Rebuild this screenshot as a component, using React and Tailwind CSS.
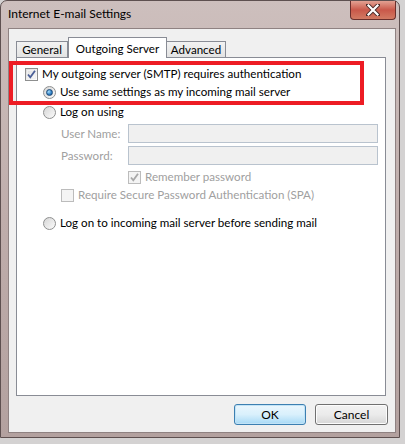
import React from "react";

const font = { fontFamily: 'Lato, "Liberation Sans", Arial, sans-serif' };

function Checkbox({ checked, disabled }) {
  return (
    <span
      className={`relative inline-flex h-[13px] w-[13px] shrink-0 items-center justify-center border ${
        disabled ? "border-[#bcbcbc] bg-[#f4f4f4]" : "border-[#8e8f8f] bg-gradient-to-br from-[#dcdcdc] to-[#ffffff]"
      }`}
    >
      {!disabled && <span className="absolute inset-[1px] border border-[#f0f0f0] bg-gradient-to-br from-[#e2e2e2] to-[#f8f8f8]" />}
      {checked && (
        <svg width="11" height="11" viewBox="0 0 11 11" className="relative">
          <path
            d="M2 5.5 L4.3 8.3 L9 1.8"
            fill="none"
            stroke={disabled ? "#a8a8a8" : "#4a5f97"}
            strokeWidth="1.8"
          />
        </svg>
      )}
    </span>
  );
}

function Radio({ checked }) {
  return (
    <span className="relative inline-flex h-[13px] w-[13px] shrink-0 items-center justify-center rounded-full border border-[#8e8f8f] bg-gradient-to-br from-[#d6d6d6] to-[#fbfbfb]">
      {checked && (
        <span className="h-[7px] w-[7px] rounded-full border border-[#1c4a78] bg-[radial-gradient(circle_at_35%_35%,#a8e0ff,#2b7bc0_60%,#1a4f86)]" />
      )}
    </span>
  );
}

export default function App() {
  return (
    <div className="h-[444px] w-[405px] overflow-hidden bg-[#d4d2d2]" style={font}>
      <div className="relative flex h-[438px] w-[400px] flex-col rounded-t-[7px] border border-[#5e5050] bg-gradient-to-b from-[#cdbfbd] via-[#bfadab] to-[#b3a19f] pb-[4px] pl-[7px] pr-[3px] text-[11.6px] text-black">
        {/* Title bar */}
        <div className="flex h-[27px] items-start justify-between">
          <div className="pt-[6px] text-[12px] leading-[14px] text-black">Internet E-mail Settings</div>
          <div className="flex h-[19px] w-[46px] items-center justify-center rounded-b-[4px] border border-t-0 border-[#6a2f2c] bg-gradient-to-b from-[#e2a193] via-[#c9584a] to-[#d27a63]">
            <svg width="14" height="12" viewBox="0 0 14 12">
              <path d="M2 1 L12 11 M12 1 L2 11" stroke="#4a2a28" strokeWidth="4" strokeLinecap="square" />
              <path d="M2.5 1.5 L11.5 10.5 M11.5 1.5 L2.5 10.5" stroke="#ffffff" strokeWidth="2.2" strokeLinecap="square" />
            </svg>
          </div>
        </div>
        {/* Client area */}
        <div className="flex flex-1 flex-col border border-[#8f8282] bg-[#f0f0f0] pl-[7px] pr-[9px] pt-[7px]">
          {/* Tabs */}
          <div className="flex h-[21px] items-end">
            <div className="flex h-[16px] w-[52px] items-center justify-center border border-b-0 border-[#898c95] bg-gradient-to-b from-[#f2f2f2] to-[#e3e3e3]">
              General
            </div>
            <div className="relative z-10 mb-[-1px] flex h-[21px] w-[99px] items-start justify-center border border-b-0 border-[#898c95] bg-white pt-[2px]">
              Outgoing Server
            </div>
            <div className="flex h-[16px] w-[59px] items-center justify-center border border-b-0 border-l-0 border-[#898c95] bg-gradient-to-b from-[#f2f2f2] to-[#e3e3e3]">
              Advanced
            </div>
          </div>
          {/* Panel */}
          <div className="flex h-[339px] flex-col border border-[#898c95] bg-white pl-[8px] pt-[7px]">
            <div className="flex h-[18px] items-center gap-[4px]">
              <Checkbox checked />
              <span>My outgoing server (SMTP) requires authentication</span>
            </div>
            <div className="flex h-[18px] items-center gap-[4px] pl-[18px]">
              <Radio checked />
              <span>Use same settings as my incoming mail server</span>
            </div>
            <div className="mt-[2px] flex h-[18px] items-center gap-[4px] pl-[18px]">
              <Radio />
              <span>Log on using</span>
            </div>
            <div className="mt-[3px] flex h-[19px] items-center pl-[36px] text-[#a0a0a0]">
              <span className="w-[67px]">User Name:</span>
              <span className="h-[19px] w-[250px] border border-[#b9c3ce] bg-[#f0f0f0]" />
            </div>
            <div className="mt-[3px] flex h-[19px] items-center pl-[36px] text-[#a0a0a0]">
              <span className="w-[67px]">Password:</span>
              <span className="h-[19px] w-[250px] border border-[#b9c3ce] bg-[#f0f0f0]" />
            </div>
            <div className="mt-[3px] flex h-[18px] items-center gap-[4px] pl-[103px] text-[#a0a0a0]">
              <Checkbox checked disabled />
              <span>Remember password</span>
            </div>
            <div className="flex h-[18px] items-center gap-[4px] pl-[36px] text-[#a0a0a0]">
              <Checkbox disabled />
              <span>Require Secure Password Authentication (SPA)</span>
            </div>
            <div className="mt-[10px] flex h-[18px] items-center gap-[4px] pl-[18px]">
              <Radio />
              <span>Log on to incoming mail server before sending mail</span>
            </div>
          </div>
          {/* Buttons */}
          <div className="mr-[-2px] mt-[8px] flex justify-end gap-[9px]">
            <button className="flex h-[21px] w-[72px] items-center justify-center rounded-[3px] border border-[#3c7fb1] bg-gradient-to-b from-[#eaf6fd] via-[#d9f0fc] to-[#a7d9f5] text-[12px] shadow-[inset_0_0_0_1px_#c2e3f6]">
              OK
            </button>
            <button className="flex h-[21px] w-[73px] items-center justify-center rounded-[3px] border border-[#707070] bg-gradient-to-b from-[#f2f2f2] via-[#ebebeb] to-[#d6d6d6] text-[12px] shadow-[inset_0_0_0_1px_#fcfcfc]">
              Cancel
            </button>
          </div>
        </div>
        {/* Red annotation rectangle */}
        <div className="pointer-events-none absolute left-[8px] top-[60px] h-[44px] w-[355px] border-[4px] border-[#ed1c24]" />
      </div>
    </div>
  );
}
